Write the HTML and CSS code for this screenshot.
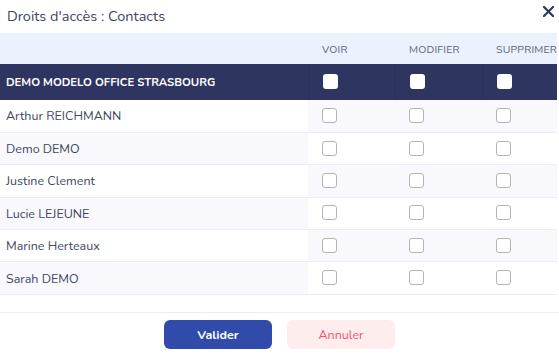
FILE: index.html
```html
<!doctype html>
<html lang="fr">
<head>
    <meta charset="UTF-8">
    <title>Droits d'accès</title>
    <link rel="stylesheet" href="styles.css">
</head>
<body>
<div class="modal">
    <div class="modal_head">
        <span class="modal_title">Droits d'accès : Contacts</span>
        <svg class="close" width="11" height="11" viewBox="0 0 11 11">
            <path d="M1 1L10 10M10 1L1 10" stroke="#2d3561" stroke-width="2.2" stroke-linecap="round"/>
        </svg>
    </div>
    <table class="rights">
        <colgroup>
            <col class="col_name">
            <col class="col_right">
            <col class="col_right">
            <col>
        </colgroup>
        <thead>
        <tr class="labels">
            <th></th>
            <th>VOIR</th>
            <th>MODIFIER</th>
            <th>SUPPRIMER</th>
        </tr>
        <tr class="group">
            <th>DEMO MODELO OFFICE STRASBOURG</th>
            <td><input type="checkbox"></td>
            <td><input type="checkbox"></td>
            <td><input type="checkbox"></td>
        </tr>
        </thead>
        <tbody>
        <tr>
            <td>Arthur REICHMANN</td>
            <td><input type="checkbox"></td>
            <td><input type="checkbox"></td>
            <td><input type="checkbox"></td>
        </tr>
        <tr>
            <td>Demo DEMO</td>
            <td><input type="checkbox"></td>
            <td><input type="checkbox"></td>
            <td><input type="checkbox"></td>
        </tr>
        <tr>
            <td>Justine Clement</td>
            <td><input type="checkbox"></td>
            <td><input type="checkbox"></td>
            <td><input type="checkbox"></td>
        </tr>
        <tr>
            <td>Lucie LEJEUNE</td>
            <td><input type="checkbox"></td>
            <td><input type="checkbox"></td>
            <td><input type="checkbox"></td>
        </tr>
        <tr>
            <td>Marine Herteaux</td>
            <td><input type="checkbox"></td>
            <td><input type="checkbox"></td>
            <td><input type="checkbox"></td>
        </tr>
        <tr>
            <td>Sarah DEMO</td>
            <td><input type="checkbox"></td>
            <td><input type="checkbox"></td>
            <td><input type="checkbox"></td>
        </tr>
        </tbody>
    </table>
    <div class="spacer"></div>
    <div class="modal_foot">
        <button class="btn btn_ok">Valider</button>
        <button class="btn btn_cancel">Annuler</button>
    </div>
</div>
</body>
</html>
```

FILE: styles.css
```css
body {
    margin: 0;
    background-color: #fff;
    font-family: "Nunito", "Noto Sans", sans-serif;
    color: #414763;
}

.modal {
    width: 559px;
    overflow: hidden;
}

.modal_head {
    height: 33px;
    display: flex;
    align-items: center;
    justify-content: space-between;
    padding: 0 5px 2px 7px;
    box-sizing: border-box;
}

.modal_title {
    font-size: 14.5px;
    color: #3e455e;
}

.close {
    margin-top: -8px;
}

.rights {
    width: 557px;
    border-collapse: collapse;
    table-layout: fixed;
}

.col_name {
    width: 308px;
}

.col_right {
    width: 87px;
}

.rights th,
.rights td {
    padding: 0 0 0 14px;
    text-align: left;
    white-space: nowrap;
}

.rights th:first-child,
.rights td:first-child {
    padding-left: 6px;
}

.labels {
    height: 31px;
    background-color: #ebf2fd;
}

.labels th {
    font-size: 10.5px;
    font-weight: normal;
    color: #5d6378;
    letter-spacing: 0.2px;
    padding-top: 1px;
}

.group {
    height: 36px;
    background-color: #2d3560;
}

.group th {
    font-size: 11.3px;
    font-weight: bold;
    color: #fff;
}

.group td {
    border-left: 1px solid #2a3159;
}

.group input {
    appearance: none;
    width: 15px;
    height: 15px;
    margin: 4px 0 0 0;
    background-color: #fff;
    border-radius: 3px;
}

tbody tr {
    height: 32.4px;
    border-bottom: 1px solid #e8edf7;
}

tbody td {
    font-size: 12.5px;
    color: #414763;
}

tbody tr:nth-child(odd) td {
    background-color: #f8f8fd;
}

tbody tr:nth-child(odd) td:first-child {
    background-color: #fff;
}

tbody tr:nth-child(even) td:first-child {
    background-color: #f8f8fd;
}

tbody input {
    appearance: none;
    width: 15px;
    height: 15px;
    margin: 3px 0 0 0;
    background-color: #fff;
    border: 1px solid #b4b4b4;
    border-radius: 3px;
    box-sizing: border-box;
}

.spacer {
    height: 17px;
    border-bottom: 1px solid #e8edf7;
}

.modal_foot {
    display: flex;
    justify-content: center;
    gap: 15px;
    padding-top: 7px;
}

.btn {
    width: 108px;
    height: 29px;
    border: none;
    border-radius: 6px;
    font-family: inherit;
    font-size: 12.5px;
    cursor: pointer;
}

.btn_ok {
    background-color: #304ba9;
    color: #fff;
    font-weight: bold;
}

.btn_cancel {
    background-color: #ffeded;
    color: #f2546d;
}
```
